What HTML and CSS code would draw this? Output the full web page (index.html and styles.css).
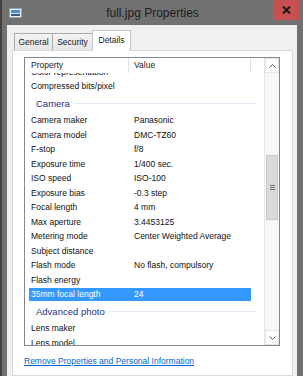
FILE: index.html
```html
<!DOCTYPE html>
<html lang="en">
  <head>
    <meta charset="UTF-8" />
    <meta name="viewport" content="width=device-width, initial-scale=1.0" />
    <title>full.jpg Properties</title>
    <link rel="stylesheet" href="styles.css">
  </head>
  <body>
    <div class="janela">
      <div class="barraTitulo">
        <svg class="icone" width="13" height="10" viewBox="0 0 13 10">
          <rect x="0.5" y="0.5" width="12" height="9" fill="#eef2f6" stroke="#8ea3b7" />
          <rect x="2" y="2" width="9" height="6" fill="#4f8fcc" />
          <rect x="2" y="5" width="9" height="1" fill="#cfe3f3" />
          <rect x="2" y="6" width="9" height="2" fill="#2f5f8f" />
        </svg>
        <div class="titulo">full.jpg Properties</div>
        <div class="fechar">
          <svg width="9" height="8" viewBox="0 0 9 8">
            <path d="M1 0.5 L8 7.5 M8 0.5 L1 7.5" stroke="#1a1a1a" stroke-width="2" />
          </svg>
        </div>
      </div>

      <div class="cliente">
        <div class="abas">
          <div class="aba abaGeral">General</div>
          <div class="aba abaSeguranca">Security</div>
          <div class="aba abaDetalhes ativa">Details</div>
        </div>

        <div class="painel">
          <div class="lista">
            <div class="listaCorpo">
              <div class="cabecalho">
                <div class="colProp">Property</div>
                <div class="colValor">Value</div>
                <div class="colResto"></div>
              </div>
              <div class="linhas">
                <div class="linha primeira"><span>Color representation</span><span></span></div>
                <div class="linha"><span>Compressed bits/pixel</span><span></span></div>
                <div class="grupo"><span>Camera</span></div>
                <div class="linha"><span>Camera maker</span><span>Panasonic</span></div>
                <div class="linha"><span>Camera model</span><span>DMC-TZ60</span></div>
                <div class="linha"><span>F-stop</span><span>f/8</span></div>
                <div class="linha"><span>Exposure time</span><span>1/400 sec.</span></div>
                <div class="linha"><span>ISO speed</span><span>ISO-100</span></div>
                <div class="linha"><span>Exposure bias</span><span>-0.3 step</span></div>
                <div class="linha"><span>Focal length</span><span>4 mm</span></div>
                <div class="linha"><span>Max aperture</span><span>3.4453125</span></div>
                <div class="linha"><span>Metering mode</span><span>Center Weighted Average</span></div>
                <div class="linha"><span>Subject distance</span><span></span></div>
                <div class="linha"><span>Flash mode</span><span>No flash, compulsory</span></div>
                <div class="linha"><span>Flash energy</span><span></span></div>
                <div class="linha selecionada"><span>35mm focal length</span><span>24</span></div>
                <div class="grupo"><span>Advanced photo</span></div>
                <div class="linha"><span>Lens maker</span><span></span></div>
                <div class="linha"><span>Lens model</span><span></span></div>
              </div>
            </div>

            <div class="rolagem">
              <div class="botaoRolagem">
                <svg width="7" height="4" viewBox="0 0 7 4">
                  <path d="M0.5 3.5 L3.5 0.5 L6.5 3.5" fill="none" stroke="#606060" />
                </svg>
              </div>
              <div class="trilho">
                <div class="polegar">
                  <div class="grip"></div>
                  <div class="grip"></div>
                  <div class="grip"></div>
                </div>
              </div>
              <div class="botaoRolagem">
                <svg width="7" height="4" viewBox="0 0 7 4">
                  <path d="M0.5 0.5 L3.5 3.5 L6.5 0.5" fill="none" stroke="#606060" />
                </svg>
              </div>
            </div>
          </div>

          <a class="link" href="#">Remove Properties and Personal Information</a>
        </div>
      </div>
    </div>
  </body>
</html>
```

FILE: styles.css
```css
body {
  margin: 0;
  width: 303px;
  height: 376px;
  overflow: hidden;
  background-color: #4b3f3c;
  font-family: "Liberation Sans", Arial, sans-serif;
  font-size: 8.5px;
  color: #111;
}
.janela {
  margin-left: 2px;
  width: 301px;
  height: 376px;
  display: flex;
  flex-direction: column;
  background-color: #717171;
}
.barraTitulo {
  height: 25px;
  display: grid;
  grid-template-columns: 1fr auto 1fr;
  align-items: start;
}
.icone {
  margin: 8px 0 0 7px;
}
.titulo {
  font-size: 12px;
  line-height: 26px;
  color: #1c1c1c;
}
.fechar {
  justify-self: end;
  margin-right: 4px;
  width: 26px;
  height: 20px;
  background-color: #c75050;
  display: flex;
  align-items: center;
  justify-content: center;
}

.cliente {
  flex: 1;
  margin: 0 6px 0 5px;
  padding: 5px 4px 0 5px;
  background-color: #f0f0f0;
  display: flex;
  flex-direction: column;
}
.abas {
  display: flex;
  align-items: flex-start;
  height: 21px;
  margin: 0 0 -1px 2px;
}
.aba {
  box-sizing: border-box;
  height: 17px;
  margin-top: 3px;
  border: 1px solid #acacac;
  border-bottom: none;
  background: linear-gradient(#f3f3f3, #e6e6e6);
  line-height: 16px;
  text-align: center;
  color: #1a1a1a;
}
.abaGeral {
  width: 39px;
}
.abaSeguranca {
  width: 41px;
  margin-left: -1px;
}
.abaDetalhes {
  width: 39px;
  margin-left: -1px;
}
.ativa {
  position: relative;
  height: 21px;
  margin-top: 0;
  background: white;
  border-color: #c4c4c4;
  line-height: 18px;
}

.painel {
  flex: 1;
  background-color: white;
  border: 1px solid #d9d9d9;
  padding: 6px 12px 0 11px;
}
.lista {
  box-sizing: border-box;
  height: 289px;
  border: 1px solid #828790;
  display: flex;
}
.listaCorpo {
  flex: 1;
  display: flex;
  flex-direction: column;
  overflow: hidden;
}
.cabecalho {
  height: 15px;
  display: flex;
  line-height: 15px;
  color: #1e1e1e;
  background-color: white;
}
.colProp {
  box-sizing: border-box;
  width: 104px;
  padding-left: 6px;
  border-right: 1px solid #e3e3e3;
}
.colValor {
  box-sizing: border-box;
  width: 122px;
  padding-left: 5px;
  border-right: 1px solid #e3e3e3;
}
.colResto {
  flex: 1;
}

.linhas {
  flex: 1;
  min-height: 0;
  overflow: hidden;
  display: flex;
  flex-direction: column;
}
.linha {
  flex-shrink: 0;
  display: grid;
  grid-template-columns: 103px 1fr;
  margin: 1px 0 1px 4px;
  padding-left: 2px;
  width: 220px;
  height: 12.5px;
  line-height: 12.5px;
  white-space: nowrap;
}
.primeira {
  margin-top: -7.25px;
}
.selecionada {
  background-color: #3399ff;
  color: white;
}
.grupo {
  flex-shrink: 0;
  display: flex;
  align-items: center;
  gap: 4px;
  margin: 1px 0 1px 4px;
  padding-left: 7px;
  width: 221px;
  height: 17.5px;
  font-size: 9.5px;
  color: #1e3287;
}
.grupo::after {
  content: "";
  flex: 1;
  height: 1px;
  background-color: #e2ebf5;
}

.rolagem {
  width: 14px;
  display: flex;
  flex-direction: column;
  background-color: #f8f8f8;
  border-left: 1px solid #e6e6e6;
}
.botaoRolagem {
  height: 15px;
  display: flex;
  align-items: center;
  justify-content: center;
  border: 1px solid #e6e6e6;
  box-sizing: border-box;
  background-color: white;
}
.trilho {
  flex: 1;
  padding-top: 82px;
}
.polegar {
  box-sizing: border-box;
  height: 65px;
  margin: 0 1px;
  background-color: #dadada;
  border: 1px solid #cacaca;
  display: flex;
  flex-direction: column;
  align-items: center;
  justify-content: center;
  gap: 1px;
}
.grip {
  width: 5px;
  height: 1px;
  background-color: #707070;
}

.link {
  display: block;
  margin-top: 9px;
  line-height: 12px;
  color: #0066cc;
  text-decoration: underline;
}
```
